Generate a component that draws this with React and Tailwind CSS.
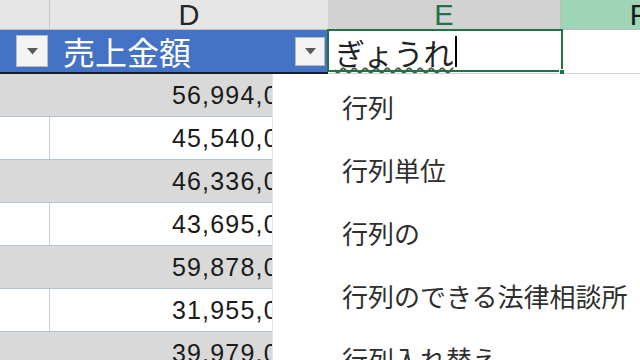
import React from "react";

const rows = [
  { v: "56,994,000", band: true },
  { v: "45,540,000", band: false },
  { v: "46,336,000", band: true },
  { v: "43,695,000", band: false },
  { v: "59,878,000", band: true },
  { v: "31,955,000", band: false },
  { v: "39,979,000", band: true },
];

const candidates = ["行列", "行列単位", "行列の", "行列のできる法律相談所", "行列入れ替え"];

function FilterButton({ className }) {
  return (
    <div className={"flex items-center justify-center bg-[#f3f3f3] border border-[#b9b9b9] " + className}>
      <svg width="11" height="7" viewBox="0 0 11 7">
        <path d="M0 0 L11 0 L5.5 6.5 Z" fill="#5a5a5a" />
      </svg>
    </div>
  );
}

export default function App() {
  return (
    <div className="relative w-[640px] h-[360px] overflow-hidden bg-white font-['Liberation_Sans',sans-serif]">
      {/* column letters */}
      <div className="flex h-[30px] border-b border-[#bfbfbf] text-[29px] leading-[30px]">
        <div className="w-[50px] shrink-0 bg-[#e6e6e6] border-r border-[#c8c8c8]" />
        <div className="w-[278px] shrink-0 bg-[#e6e6e6] text-center text-[#262626]">D</div>
        <div className="w-[233px] shrink-0 bg-[#d2d2d2] text-center text-[#217346] border-r border-[#bdbdbd]">E</div>
        <div className="w-[155px] shrink-0 bg-[#9fd5b7] text-center text-[#1a1a1a]">F</div>
      </div>

      {/* table header */}
      <div className="flex h-[44px]">
        <div className="w-[50px] shrink-0 flex items-center bg-[#4472c4] border-b-2 border-[#1e1e1e]">
          <FilterButton className="ml-[16px] w-[32px] h-[32px]" />
        </div>
        <div className="w-[278px] shrink-0 flex items-center bg-[#4472c4] border-b-2 border-[#1e1e1e] pl-[13px] pr-[3px]">
          <span className="flex-1 text-white text-[32px] leading-none font-['Noto_Sans_CJK_JP',sans-serif]">売上金額</span>
          <FilterButton className="w-[30px] h-[29px]" />
        </div>
        <div className="relative w-[233px] shrink-0 flex items-center bg-white border-b border-[#d0d0d0] pl-[7px]">
          <span className="text-[30px] leading-[34px] text-[#222] font-['Noto_Sans_CJK_JP',sans-serif] underline decoration-wavy decoration-[#555] decoration-[1.5px] underline-offset-[2px]">
            ぎょうれ
          </span>
          <span className="ml-[1px] w-[2px] h-[31px] bg-black" />
          <div className="absolute -left-px -right-[2px] -top-px bottom-[1px] border-2 border-[#217346]" />
          <div className="absolute -right-[4px] bottom-[-2px] w-[6px] h-[6px] bg-[#217346] border border-white" />
        </div>
        <div className="flex-1 bg-white border-b border-[#d0d0d0]" />
      </div>

      {/* data rows */}
      {rows.map((r, i) => (
        <div
          key={i}
          className={
            "flex h-[43px] border-b border-[#b4c3dc] " + (r.band ? "bg-[#d9d9d9]" : "bg-white")
          }
        >
          <div className={"w-[50px] shrink-0 " + (r.band ? "" : "border-r border-[#cfcfcf]")} />
          <div className="w-[278px] shrink-0 flex items-center justify-end pr-[19px] text-[25px] leading-none tracking-[1.2px] text-[#1a1a1a]">
            {r.v}
          </div>
          <div className="flex-1" />
        </div>
      ))}

      {/* IME candidate list */}
      <div className="absolute left-[272px] top-[74px] right-0 bottom-0 bg-white border-l border-[#e4e4e4] pt-[1px] font-['Noto_Sans_CJK_JP',sans-serif]">
        {candidates.map((c) => (
          <div key={c} className="h-[63px] flex items-center pl-[69px] text-[26px] leading-none text-[#2e2e2e]">
            {c}
          </div>
        ))}
      </div>
    </div>
  );
}
